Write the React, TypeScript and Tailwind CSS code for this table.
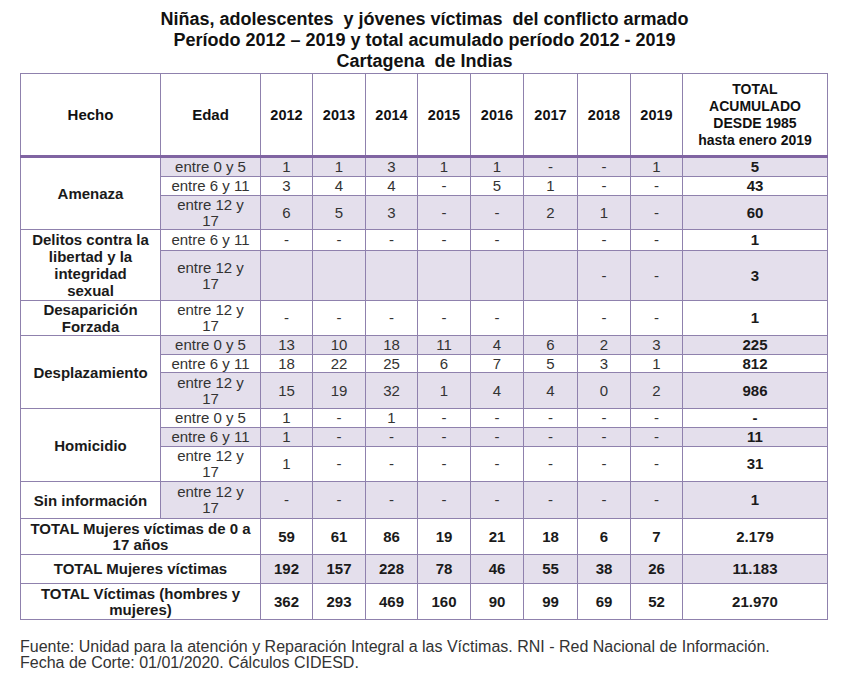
import React from 'react';

type Row = {
  hecho?: { text: string; rowSpan: number };
  edad: string;
  values: string[];
  total: string;
  fill: boolean;
  height: number;
};

const YEARS = ['2012', '2013', '2014', '2015', '2016', '2017', '2018', '2019'];

const ROWS: Row[] = [
  { hecho: { text: 'Amenaza', rowSpan: 3 }, edad: 'entre 0 y 5', values: ['1', '1', '3', '1', '1', '-', '-', '1'], total: '5', fill: true, height: 20 },
  { edad: 'entre 6 y 11', values: ['3', '4', '4', '-', '5', '1', '-', '-'], total: '43', fill: false, height: 19 },
  { edad: 'entre 12 y\n17', values: ['6', '5', '3', '-', '-', '2', '1', '-'], total: '60', fill: true, height: 34 },
  { hecho: { text: 'Delitos contra la\nlibertad y la\nintegridad\nsexual', rowSpan: 2 }, edad: 'entre 6 y 11', values: ['-', '-', '-', '-', '-', '', '-', '-'], total: '1', fill: false, height: 21 },
  { edad: 'entre 12 y\n17', values: ['', '', '', '', '', '', '-', '-'], total: '3', fill: true, height: 50 },
  { hecho: { text: 'Desaparición\nForzada', rowSpan: 1 }, edad: 'entre 12 y\n17', values: ['-', '-', '-', '-', '-', '', '-', '-'], total: '1', fill: false, height: 35 },
  { hecho: { text: 'Desplazamiento', rowSpan: 3 }, edad: 'entre 0 y 5', values: ['13', '10', '18', '11', '4', '6', '2', '3'], total: '225', fill: true, height: 19 },
  { edad: 'entre 6 y 11', values: ['18', '22', '25', '6', '7', '5', '3', '1'], total: '812', fill: false, height: 18 },
  { edad: 'entre 12 y\n17', values: ['15', '19', '32', '1', '4', '4', '0', '2'], total: '986', fill: true, height: 36 },
  { hecho: { text: 'Homicidio', rowSpan: 3 }, edad: 'entre 0 y 5', values: ['1', '-', '1', '-', '-', '-', '-', '-'], total: '-', fill: false, height: 19 },
  { edad: 'entre 6 y 11', values: ['1', '-', '-', '-', '-', '-', '-', '-'], total: '11', fill: true, height: 19 },
  { edad: 'entre 12 y\n17', values: ['1', '-', '-', '-', '-', '-', '-', '-'], total: '31', fill: false, height: 35 },
  { hecho: { text: 'Sin información', rowSpan: 1 }, edad: 'entre 12 y\n17', values: ['-', '-', '-', '-', '-', '-', '-', '-'], total: '1', fill: true, height: 37 },
];

const TOTALS = [
  { label: 'TOTAL Mujeres víctimas de 0 a\n17 años', values: ['59', '61', '86', '19', '21', '18', '6', '7'], total: '2.179', fill: false, height: 36 },
  { label: 'TOTAL Mujeres víctimas', values: ['192', '157', '228', '78', '46', '55', '38', '26'], total: '11.183', fill: true, height: 29 },
  { label: 'TOTAL Víctimas (hombres y\nmujeres)', values: ['362', '293', '469', '160', '90', '99', '69', '52'], total: '21.970', fill: false, height: 36 },
];

const COL_WIDTHS = [140, 100, 52, 53, 52, 53, 53, 54, 53, 52, 145];

// shared cell style: thin purple-grey grid, centered
const cell = 'border border-[#8f81ad] p-0 text-center align-middle whitespace-pre-line leading-[16px]';

export default function App() {
  return (
    <div className="w-[849px] h-[687px] bg-white text-[#222] font-['Liberation_Sans',Arial,sans-serif]">
      <div className="pt-[9px] text-center text-[18px] font-bold leading-[21px] text-[#111]">
        <div>Niñas, adolescentes&nbsp; y jóvenes víctimas&nbsp; del conflicto armado</div>
        <div>Período 2012 – 2019 y total acumulado período 2012 - 2019</div>
        <div>Cartagena&nbsp; de Indias</div>
      </div>

      <table className="ml-[20px] mt-[1px] w-[807px] table-fixed border-collapse border border-[#8f81ad]">
        <colgroup>
          {COL_WIDTHS.map((w, i) => (
            <col key={i} style={{ width: w }} />
          ))}
        </colgroup>
        <thead>
          <tr className="h-[83px] text-[15px] font-bold text-[#111]">
            <th className={`${cell} border-b-[3px] border-b-[#8064a2]`}>Hecho</th>
            <th className={`${cell} border-b-[3px] border-b-[#8064a2]`}>Edad</th>
            {YEARS.map(y => (
              <th key={y} className={`${cell} border-b-[3px] border-b-[#8064a2] text-[14.5px]`}>{y}</th>
            ))}
            <th className={`${cell} border-b-[3px] border-b-[#8064a2] text-[14px] leading-[17px]`}>
              {'TOTAL\nACUMULADO\nDESDE 1985\nhasta enero 2019'}
            </th>
          </tr>
        </thead>
        <tbody>
          {ROWS.map((row, i) => {
            const bg = row.fill ? 'bg-[#e4dfec]' : 'bg-white';
            return (
              <tr key={i} style={{ height: row.height }} className="text-[15px]">
                {row.hecho && (
                  <td rowSpan={row.hecho.rowSpan} className={`${cell} bg-white font-bold leading-[17px] text-[#1a1a1a]`}>
                    {row.hecho.text}
                  </td>
                )}
                <td className={`${cell} ${bg} text-[#333]`}>{row.edad}</td>
                {row.values.map((v, j) => (
                  <td key={j} className={`${cell} ${bg} text-[#333]`}>{v}</td>
                ))}
                <td className={`${cell} ${bg} font-bold text-[#1a1a1a]`}>{row.total}</td>
              </tr>
            );
          })}
          {TOTALS.map((row, i) => {
            const bg = row.fill ? 'bg-[#e4dfec]' : 'bg-white';
            return (
              <tr key={`t${i}`} style={{ height: row.height }} className="text-[15px] font-bold text-[#1a1a1a]">
                <td colSpan={2} className={`${cell} bg-white`}>{row.label}</td>
                {row.values.map((v, j) => (
                  <td key={j} className={`${cell} ${bg}`}>{v}</td>
                ))}
                <td className={`${cell} ${bg}`}>{row.total}</td>
              </tr>
            );
          })}
        </tbody>
      </table>

      <div className="ml-[20px] mt-[19px] text-[16px] leading-[16px] text-[#333]">
        <div>Fuente: Unidad para la atención y Reparación Integral a las Víctimas. RNI - Red Nacional de Información.</div>
        <div>Fecha de Corte: 01/01/2020. Cálculos CIDESD.</div>
      </div>
    </div>
  );
}
